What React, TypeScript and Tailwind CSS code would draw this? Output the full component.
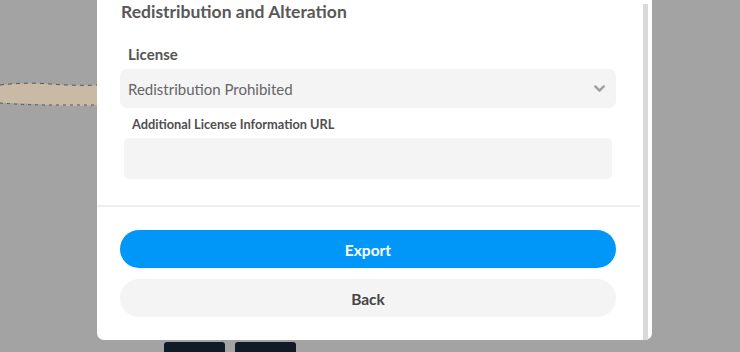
import { ChevronDown } from 'lucide-react';

export default function App() {
  return (
    <div className="relative w-[740px] h-[352px] overflow-hidden bg-[#a3a3a3] font-['Lato',sans-serif]">
      {/* scene behind the dialog */}
      <svg className="absolute left-0 top-[80px]" width="100" height="30" viewBox="0 0 100 30">
        <path d="M0 5 Q25 2 50 4 T100 5 L100 25 Q75 27 50 25 T0 23 Z" fill="#c9baa6" />
        <path d="M0 5 Q25 2 50 4 T100 5" fill="none" stroke="#555" strokeWidth="1" strokeDasharray="4 4" />
        <path d="M0 23 Q25 25 50 25 T100 25" fill="none" stroke="#555" strokeWidth="1" strokeDasharray="3 4" />
      </svg>
      <div className="absolute left-[164px] top-[342px] w-[61px] h-[14px] rounded-t-[3px] bg-[#111a27]" />
      <div className="absolute left-[235px] top-[342px] w-[61px] h-[14px] rounded-t-[3px] bg-[#111a27]" />

      {/* dialog */}
      <div className="absolute left-[97px] top-0 w-[555px] h-[340px] rounded-b-[7px] bg-white">
        <div className="flex flex-col">
          <div className="flex flex-col pl-[23px] pr-[36px]">
            <h2 className="pl-[1px] text-[17.5px] leading-[23px] font-bold text-[#585858]">Redistribution and Alteration</h2>
            <label className="mt-[20px] pl-[8px] text-[15px] leading-[22px] font-bold text-[#555]">License</label>
            <div className="mt-[4px] h-[39px] flex items-center justify-between pl-[8px] pr-[8px] rounded-[7px] bg-[#f4f4f4]">
              <span className="pt-[2px] text-[15px] text-[#666]">Redistribution Prohibited</span>
              <ChevronDown size={17} strokeWidth={3.2} className="text-[#9d9d9d]" />
            </div>
            <div className="flex flex-col px-[4px]">
              <label className="mt-[7px] pl-[8px] text-[12.8px] leading-[18px] font-bold text-[#4f4f4f]">Additional License Information URL</label>
              <div className="mt-[5px] h-[41px] rounded-[5px] bg-[#f4f4f4]" />
            </div>
          </div>
          <div className="mt-[26px] mr-[12px] h-[2px] bg-[#eeeeee]" />
          <div className="flex flex-col gap-[11px] pl-[23px] pr-[36px] mt-[23px]">
            <button className="h-[38px] pt-[3px] rounded-full bg-[#0097f8] text-white text-[15.5px] font-bold">Export</button>
            <button className="h-[38px] pt-[3px] rounded-full bg-[#f4f4f4] text-[#444] text-[15.5px] font-bold">Back</button>
          </div>
        </div>
        {/* scrollbar */}
        <div className="absolute right-[4px] top-[4px] bottom-0 w-[5px] bg-[#d9d9d9]" />
      </div>
    </div>
  );
}
